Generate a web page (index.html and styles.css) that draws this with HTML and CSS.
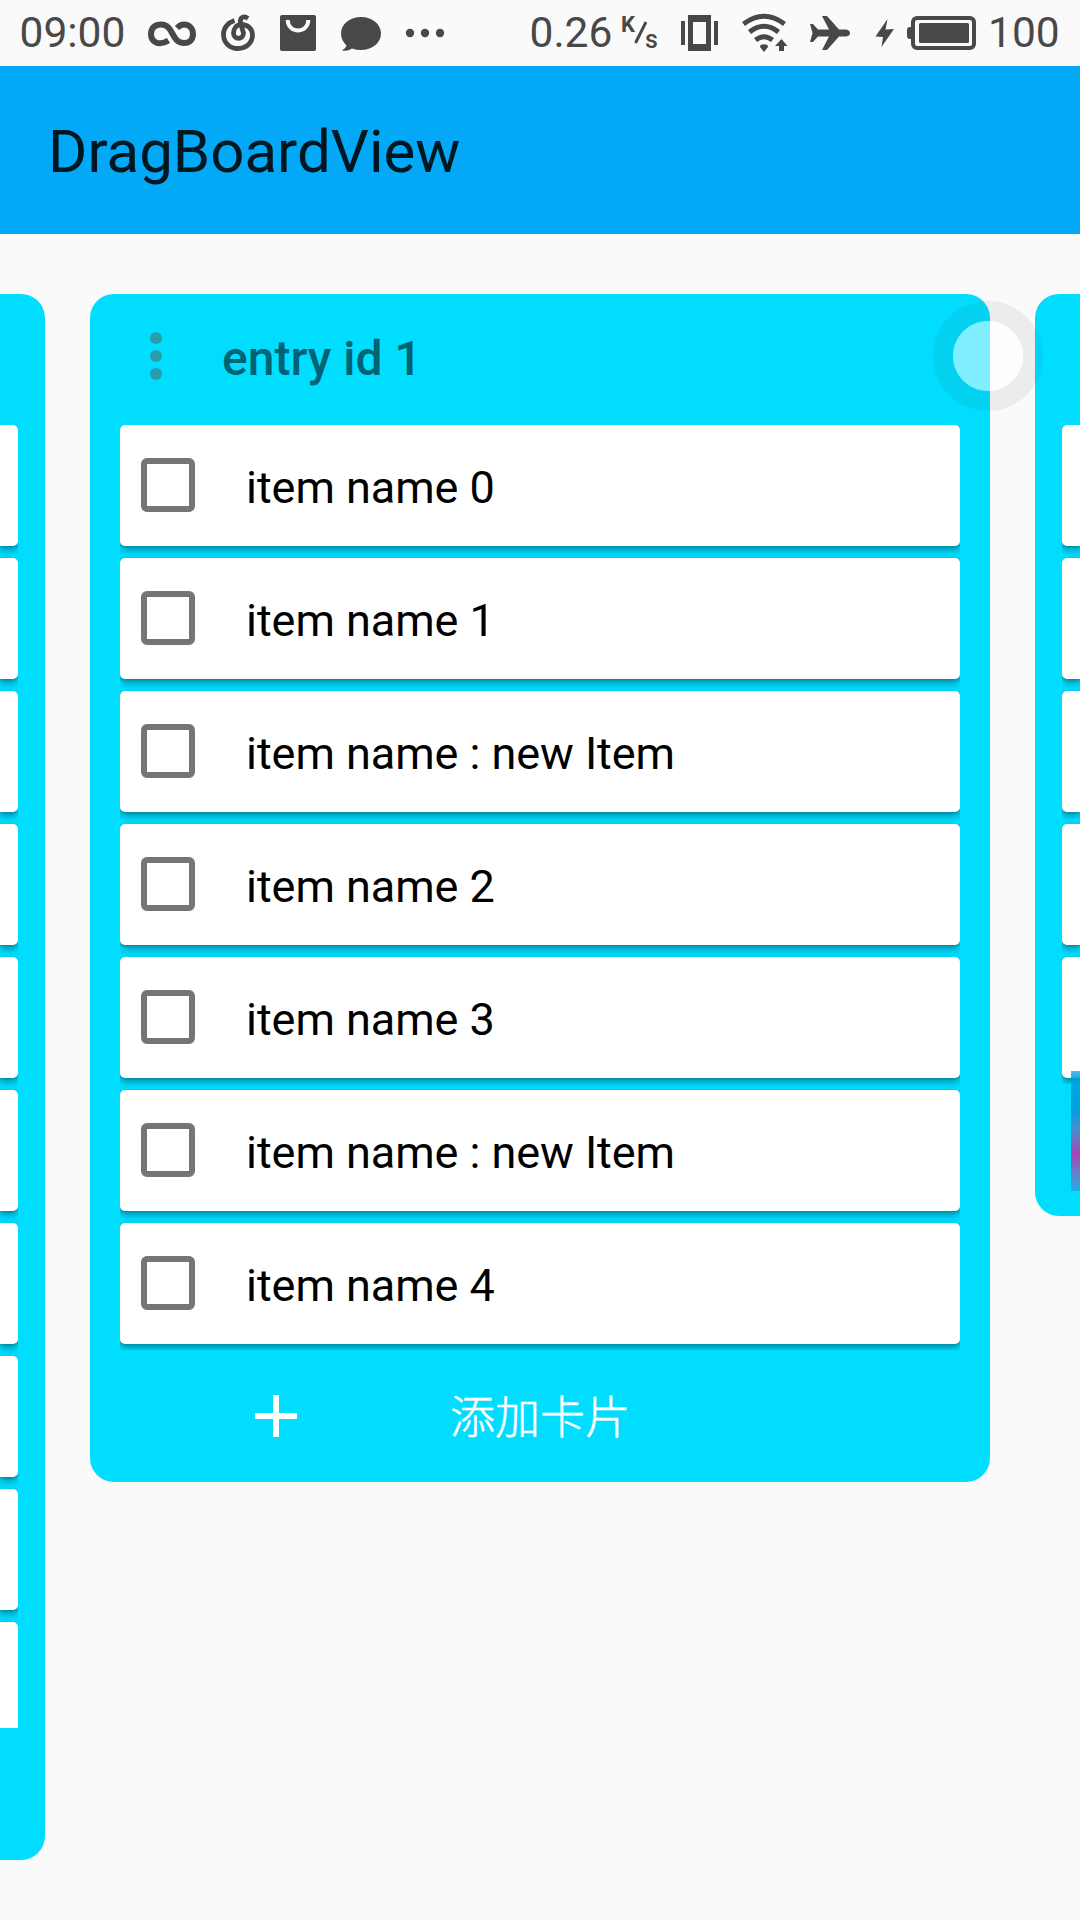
FILE: index.html
```html
<!DOCTYPE html>
<html lang="zh">
<head>
<meta charset="utf-8">
<title>DragBoardView</title>
<link rel="stylesheet" href="styles.css">
</head>
<body>
<header class="status">
  <span class="clock">09:00</span>
  <svg class="notices" width="330" height="66" viewBox="130 0 330 66">
    <path class="line6" d="M168.500 40.500C158 47 151 41 151 34C151 28 155 24.500 161 24.500C174 24.500 171 43 184 43C190 43 193 39 193 34C193 28 189 24.500 184 24.500C181 24.500 179 26 177 28"/>
    <path class="line5" d="M234.500 20.500C228 22.500 223.500 28 223.500 34.500C223.500 43 230 48.500 238 48.500C246 48.500 252.500 43 252.500 35C252.500 29 248 24.500 241 24.500C236 25 233.500 29 233.500 33C233.500 40 243.500 40 243.500 33L240.500 23C239.500 17 244 15.500 248 18.500"/>
    <rect class="ink" x="280" y="15" width="36" height="36" rx="2"/>
    <path class="handle" d="M287.700 20C288 34 308 34 308.300 20"/>
    <path class="ink" d="M361 17C372 17 381 24 381 33.500S372 50 361 50Q356 50 352 48.500Q348 51.500 342 50.500Q346 48 346.500 45.500C343 42 341 38 341 33.500C341 24 350 17 361 17Z"/>
    <circle class="ink" cx="410" cy="33" r="4.200"/><circle class="ink" cx="425" cy="33" r="4.200"/><circle class="ink" cx="440" cy="33" r="4.200"/>
  </svg>
  <span class="speed">0.26</span>
  <span class="unit"><i class="unit-k">K</i><svg class="slash" width="14" height="24" viewBox="0 0 14 24"><path d="M1.500 22L12 1"/></svg><i class="unit-s">s</i></span>
  <svg class="system" width="310" height="66" viewBox="670 0 310 66">
    <path class="ink" d="M681 21h4v24h-4zM714 21h4v24h-4z"/>
    <path class="ink" fill-rule="evenodd" d="M688 15h23v36h-23zM693 22v22h13V22z"/>
    <path class="line5" d="M743.500 24Q764 8.500 784.500 24M749.500 32Q764 20.500 778.500 32M755.500 40Q764 33.500 772.500 40"/>
    <path class="ink" d="M760.500 45Q764 43.500 767.500 45L768 47L764 52L760 47ZM781.500 39L787.500 46H784V51H779V46H775Z"/>
    <path class="ink" d="M810 24H813L818 29.500H829L822 16H827L839 29.500H846Q850 30 850 33T846 36.500H839L827 50H822L829 36.500H818L813 42H810L812.500 33Z"/>
    <path class="ink" d="M887.500 19L875.500 36.500L883 37L881.500 47L894 29L885.500 29.500Z"/>
    <rect class="line4" x="913" y="18" width="61" height="30" rx="4"/>
    <rect class="ink" x="919" y="23" width="50" height="20" rx="1.500"/>
    <path class="ink" d="M913 27h-3q-3 0-3 3v6q0 3 3 3h3z"/>
  </svg>
  <span class="percent">100</span>
</header>
<h1 class="toolbar">DragBoardView</h1>
<main class="board">
  <section class="column column-prev">
    <div class="list">
      <div class="card"></div><div class="card"></div><div class="card"></div><div class="card"></div><div class="card"></div>
      <div class="card"></div><div class="card"></div><div class="card"></div><div class="card"></div><div class="card"></div>
    </div>
  </section>
  <section class="column column-main">
    <div class="head">
      <svg class="more" width="12" height="48" viewBox="0 0 12 48"><circle cx="6" cy="6" r="6"/><circle cx="6" cy="24" r="6"/><circle cx="6" cy="42" r="6"/></svg>
      <h2 class="entry">entry id 1</h2>
    </div>
    <div class="list">
      <div class="card"><span class="check"></span><span class="name">item name 0</span></div>
      <div class="card"><span class="check"></span><span class="name">item name 1</span></div>
      <div class="card"><span class="check"></span><span class="name">item name : new Item</span></div>
      <div class="card"><span class="check"></span><span class="name">item name 2</span></div>
      <div class="card"><span class="check"></span><span class="name">item name 3</span></div>
      <div class="card"><span class="check"></span><span class="name">item name : new Item</span></div>
      <div class="card"><span class="check"></span><span class="name">item name 4</span></div>
    </div>
    <div class="add">
      <svg class="plus" width="42" height="42" viewBox="0 0 42 42"><path d="M21 0V42M0 21H42"/></svg>
      <span class="add-label">添加卡片</span>
    </div>
    <div class="touch"></div>
  </section>
  <section class="column column-next">
    <div class="list">
      <div class="card"></div><div class="card"></div><div class="card"></div><div class="card"></div><div class="card"></div>
    </div>
    <div class="drag-logo"></div>
  </section>
</main>
</body>
</html>
```
FILE: styles.css
```css
* { box-sizing: border-box; }
body {
  margin: 0;
  width: 1080px;
  height: 1920px;
  overflow: hidden;
  background: #fafafa;
  font-family: Roboto, "Noto Sans CJK SC", sans-serif;
}
.status {
  display: flex;
  height: 66px;
  color: #484848;
  font-size: 42.500px;
  line-height: 66px;
}
.clock { width: 130px; padding-left: 19.500px; }
.notices, .system { flex: none; }
.speed { width: 158px; padding-left: 69.500px; }
.unit { display: flex; width: 52px; padding-left: 3px; font-weight: 500; }
.unit-k { font-style: normal; font-size: 22px; font-weight: 700; line-height: 50px; }
.slash { flex: none; margin: 21px 0 0 -1px; }
.slash path { fill: none; stroke: #484848; stroke-width: 3; }
.unit-s { margin-left: -3px; font-style: normal; font-size: 25px; line-height: 79px; }
.percent { padding-left: 8px; }
.ink { fill: #484848; }
.line4, .line5, .line6, .handle { fill: none; stroke: #484848; }
.line4 { stroke-width: 4; }
.line5 { stroke-width: 4.8; }
.line6 { stroke-width: 6; }
.handle { stroke: #fafafa; stroke-width: 4; }
.toolbar {
  margin: 0;
  height: 168px;
  padding-left: 48px;
  background: #03a9f7;
  color: #001722;
  font-size: 60px;
  font-weight: 400;
  line-height: 172px;
}
.board {
  display: flex;
  align-items: flex-start;
  gap: 45px;
  padding-top: 60px;
}
.column {
  position: relative;
  flex: none;
  background: #00ddff;
}
.column-prev {
  width: 45px;
  height: 1566px;
  padding: 131px 27px 0 0;
  border-radius: 0 24px 24px 0;
}
.column-prev .list { height: 1303px; }
.column-prev .card { border-radius: 0 5px 5px 0; }
.column-main {
  width: 900px;
  height: 1188px;
  padding: 0 30px;
  border-radius: 24px;
}
.column-next {
  width: 45px;
  height: 922px;
  padding: 131px 0 0 27px;
  border-radius: 24px 0 0 24px;
}
.column-next .card { border-radius: 5px 0 0 5px; }
.head { display: flex; height: 131px; }
.more { margin: 38px 0 0 30px; fill: #2b9cab; }
.entry {
  margin: 0 0 0 60px;
  color: #006373;
  font-size: 48px;
  font-weight: 500;
  line-height: 130px;
}
.list {
  display: flex;
  flex-direction: column;
  gap: 12px;
  padding-bottom: 6px;
  overflow: hidden;
}
.card {
  display: flex;
  flex: none;
  height: 121px;
  border-radius: 5px;
  background: #fff;
  box-shadow: 0 4px 7px rgba(0, 0, 0, .35), 0 1px 3px rgba(0, 0, 0, .12);
}
.check {
  width: 54px;
  height: 54px;
  margin: 33px 0 0 21px;
  border: 6px solid #757575;
  border-radius: 6px;
}
.name { margin-left: 51px; color: #000; font-size: 45px; letter-spacing: -.05px; line-height: 125px; }
.add { display: flex; height: 132px; color: #fff; }
.plus { margin: 45px 0 0 135px; }
.plus path { stroke: #fff; stroke-width: 6; }
.add-label {
  margin-left: 153px;
  font-family: "Noto Sans CJK SC", sans-serif;
  font-size: 45px;
  font-weight: 300;
  line-height: 130px;
  -webkit-text-stroke: .5px #fff;
}
.touch {
  position: absolute;
  z-index: 1;
  top: 7px;
  right: -53px;
  width: 110px;
  height: 110px;
  border-radius: 50%;
  background: radial-gradient(circle, rgba(255, 255, 255, .5) 34.500px, rgba(60, 60, 60, .075) 35.500px);
}
.drag-logo {
  position: absolute;
  top: 777px;
  right: 0;
  width: 9px;
  height: 120px;
  background: linear-gradient(#009ee0b0, #00a0e0e0 7px, #0099dde8 38px, #5383c9e8 60px, #b23caeef 84px, #667dc8dd 105px, #20a6dfdd);
}
```
